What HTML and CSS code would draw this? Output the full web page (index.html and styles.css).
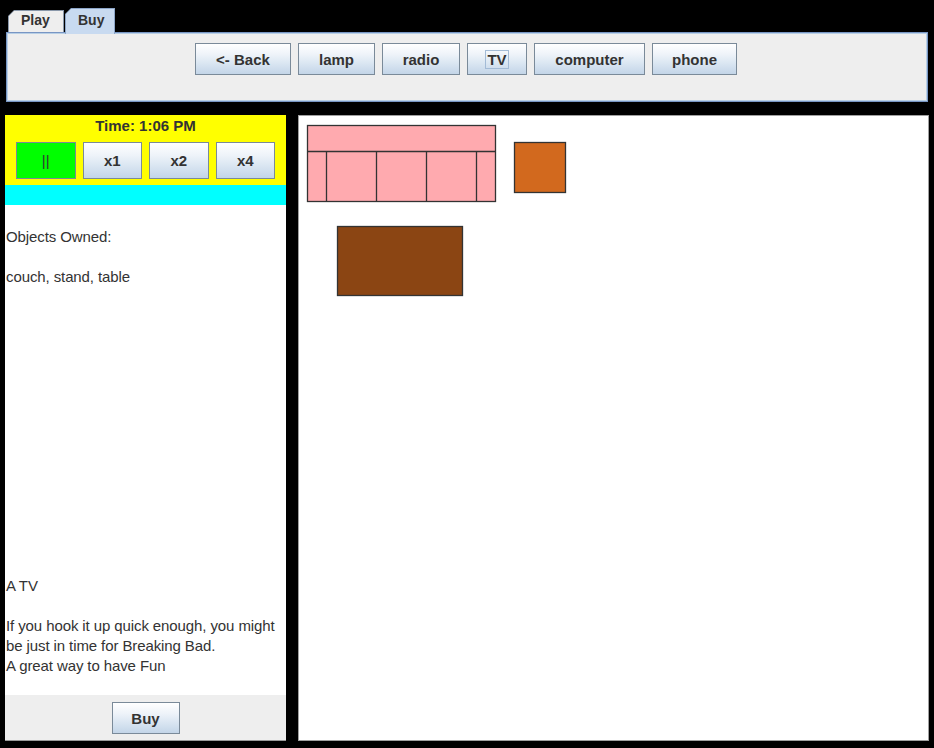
FILE: index.html
```html
<!DOCTYPE html>
<html>
<head>
<meta charset="utf-8">
<link rel="stylesheet" href="styles.css">
</head>
<body>
<div class="tabs">
  <div class="tab"><div class="tab-inner">Play</div></div>
  <div class="tab selected"><div class="tab-inner">Buy</div></div>
</div>
<div class="tabpanel">
  <button class="btn w-back">&lt;- Back</button>
  <button class="btn w-lamp">lamp</button>
  <button class="btn w-radio">radio</button>
  <button class="btn w-tv"><span class="focus">TV</span></button>
  <button class="btn w-computer">computer</button>
  <button class="btn w-phone">phone</button>
</div>
<div class="main">
  <div class="side">
    <div class="timebox">
      <div class="time">Time: 1:06 PM</div>
      <div class="speeds">
        <button class="btn sbtn pause">||</button>
        <button class="btn sbtn">x1</button>
        <button class="btn sbtn">x2</button>
        <button class="btn sbtn">x4</button>
      </div>
    </div>
    <div class="cyan"></div>
    <div class="info">
      <div class="owned">
        <div class="line">Objects Owned:</div>
        <div class="line">&nbsp;</div>
        <div class="line">couch, stand, table</div>
      </div>
      <div class="desc">
        <div class="line">A TV</div>
        <div class="line">&nbsp;</div>
        <div class="line">If you hook it up quick enough, you might</div>
        <div class="line">be just in time for Breaking Bad.</div>
        <div class="line">A great way to have Fun</div>
      </div>
    </div>
    <div class="buybar">
      <button class="btn w-buy">Buy</button>
    </div>
  </div>
  <div class="canvas">
    <svg class="room" width="629" height="624" viewBox="0 0 629 624">
      <g stroke="#333333" stroke-width="1.3">
        <rect x="8.5" y="9.5" width="188" height="76" fill="#FFAAAF"/>
        <line x1="8.5" y1="35.5" x2="196.5" y2="35.5"/>
        <line x1="27.5" y1="35.5" x2="27.5" y2="85.5"/>
        <line x1="77.5" y1="35.5" x2="77.5" y2="85.5"/>
        <line x1="127.5" y1="35.5" x2="127.5" y2="85.5"/>
        <line x1="177.5" y1="35.5" x2="177.5" y2="85.5"/>
        <rect x="215.5" y="26.5" width="51" height="50" fill="#D2691E"/>
        <rect x="38.5" y="110.5" width="125" height="69" fill="#8B4513"/>
      </g>
    </svg>
  </div>
</div>
</body>
</html>
```

FILE: styles.css
```css
html, body {
  margin: 0;
  padding: 0;
}
body {
  background: #000;
  width: 934px;
  height: 748px;
  overflow: hidden;
  font-family: "Liberation Sans", Arial, sans-serif;
  color: #333;
}
.tabs {
  height: 32px;
  display: flex;
  align-items: flex-end;
  padding-left: 8px;
  gap: 1px;
  box-sizing: border-box;
}
.tab {
  position: relative;
  background: #8a98aa;
  padding: 1px 1px 0 1px;
  height: 22px;
  box-sizing: border-box;
  clip-path: polygon(6px 0, 100% 0, 100% 100%, 0 100%, 0 6px);
}
.tab-inner {
  height: 100%;
  background: #eeeeee;
  clip-path: polygon(5px 0, 100% 0, 100% 100%, 0 100%, 0 5px);
  font-size: 14px;
  font-weight: bold;
  line-height: 19px;
  padding: 0 12px 0 12px;
  width: 30px;
}
.tab.selected {
  height: 26px;
  margin-bottom: -2px;
  z-index: 2;
  background: #8da6c8;
  padding-bottom: 0;
}
.tab.selected .tab-inner {
  background: #c8daf0;
  width: 26px;
  padding: 0 10px 0 12px;
  line-height: 22px;
}
.tabpanel {
  margin: 0 6px;
  height: 70px;
  box-sizing: border-box;
  background: #eeeeee;
  border: 1px solid #7896c4;
  box-shadow: inset 0 0 0 1px #b8cfe5;
  display: flex;
  justify-content: center;
  align-items: flex-start;
  gap: 7px;
  padding: 10px 2px 0 0;
  position: relative;
  z-index: 1;
}
.btn {
  font-family: "Liberation Sans", Arial, sans-serif;
  font-size: 15px;
  font-weight: bold;
  color: #333;
  height: 32px;
  border: 1px solid #7a8a99;
  background: linear-gradient(to bottom, #ffffff 0%, #eef3f9 35%, #dde8f3 60%, #c3d5e8 100%);
  padding: 0;
  margin: 0;
  box-sizing: border-box;
  display: flex;
  align-items: center;
  justify-content: center;
}
.w-back { width: 96px; }
.w-lamp { width: 77px; }
.w-radio { width: 78px; }
.w-tv { width: 60px; }
.w-computer { width: 111px; }
.w-phone { width: 85px; }
.w-buy { width: 68px; }
.focus {
  border: 1px solid #a3bbd6;
  padding: 0 1px;
  line-height: 17px;
}
.main {
  display: flex;
  gap: 12px;
  padding: 13px 5px 0 5px;
  height: 626px;
  box-sizing: content-box;
}
.side {
  width: 281px;
  height: 626px;
  display: flex;
  flex-direction: column;
  background: #fff;
}
.timebox {
  background: #ffff00;
  height: 70px;
  box-sizing: border-box;
  padding: 1px 11px 0 11px;
}
.time {
  text-align: center;
  font-weight: bold;
  font-size: 15px;
  line-height: 20px;
}
.speeds {
  margin-top: 6px;
  display: grid;
  grid-template-columns: repeat(4, 1fr);
  gap: 7px;
}
.sbtn {
  width: 100%;
  height: 37px;
}
.pause {
  background: #00ff00;
  font-weight: normal;
}
.cyan {
  background: #00ffff;
  height: 20px;
}
.info {
  flex: 1;
  display: flex;
  flex-direction: column;
  justify-content: space-between;
  background: #fff;
  padding: 22px 0 19px 1px;
  font-size: 15px;
  letter-spacing: -0.1px;
}
.line {
  line-height: 20px;
  white-space: nowrap;
}
.buybar {
  height: 46px;
  background: #eeeeee;
  display: flex;
  justify-content: center;
  align-items: flex-start;
  padding-top: 7px;
  box-sizing: border-box;
  border-bottom: 1px solid #9a9a9a;
}
.canvas {
  width: 631px;
  height: 626px;
  box-sizing: border-box;
  background: #fff;
  border: 1px solid #a0a0a0;
}
.room {
  display: block;
}
```
